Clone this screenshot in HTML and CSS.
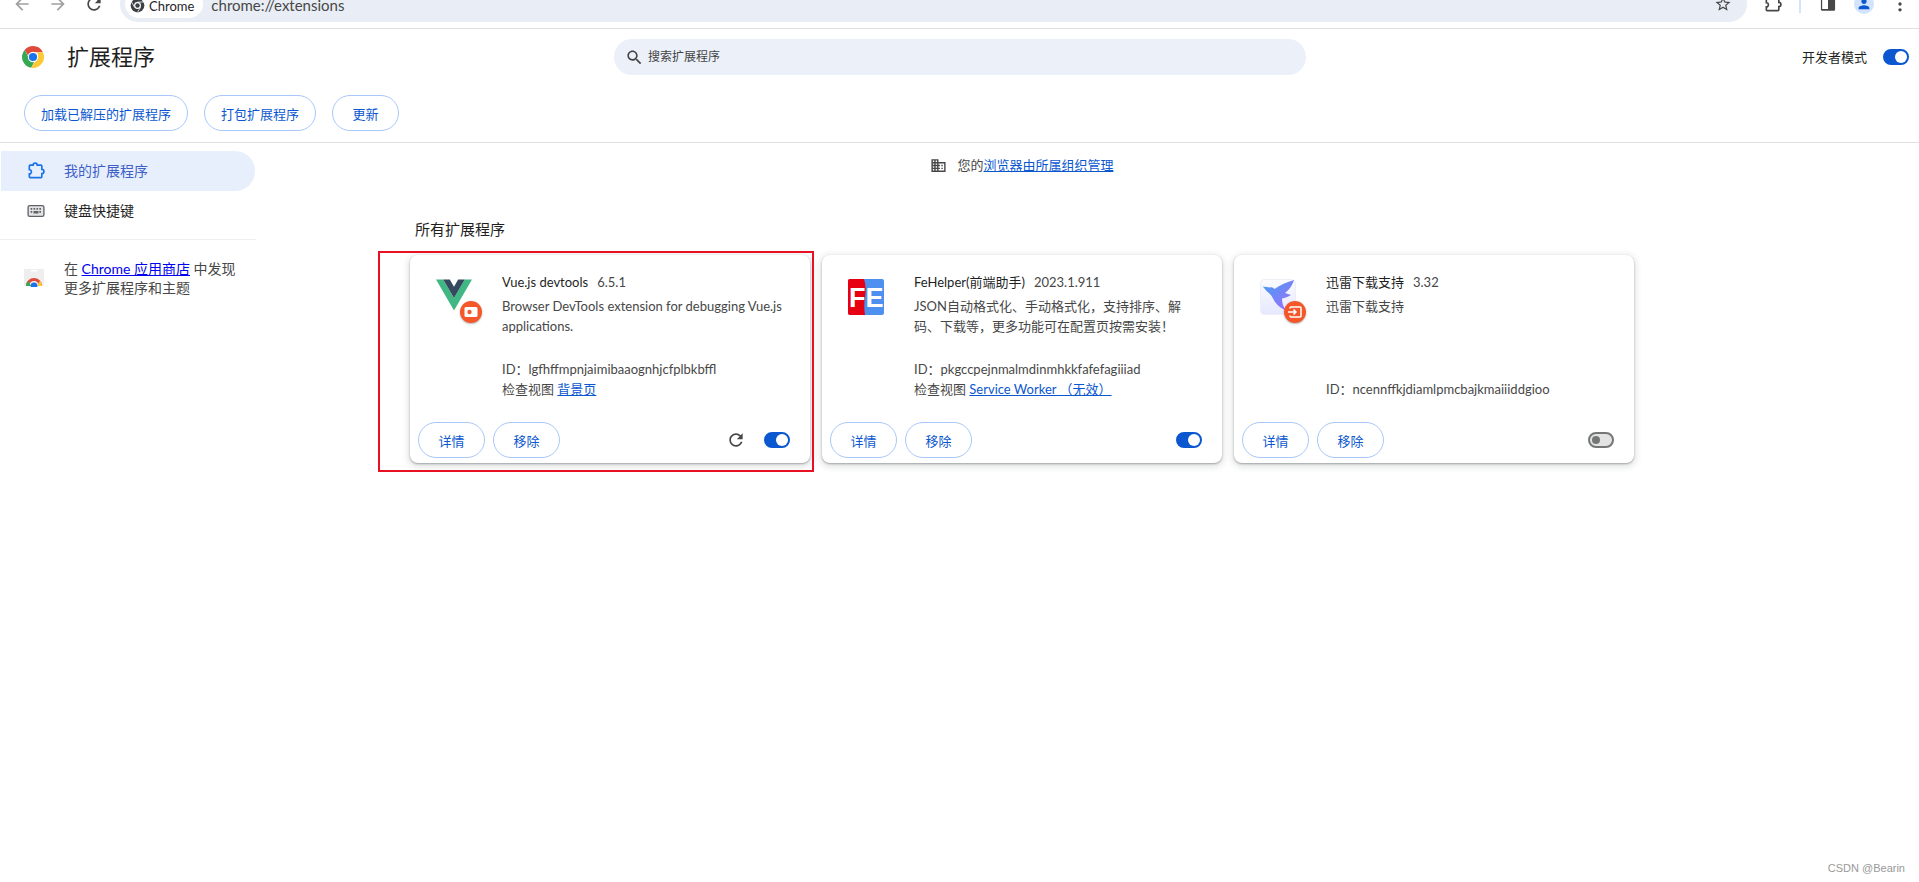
FILE: index.html
```html
<!DOCTYPE html>
<html lang="zh-CN">
<head>
  <meta charset="UTF-8" />
  <title>扩展程序</title>
  <link rel="stylesheet" href="styles.css">
</head>
<body>
  <div class="browser-bar">
    <div class="browser-row">
      <svg class="tb-icon faded" viewBox="0 0 24 24"><path d="M20 11H7.83l5.59-5.59L12 4l-8 8 8 8 1.41-1.41L7.83 13H20v-2z"/></svg>
      <svg class="tb-icon faded" viewBox="0 0 24 24"><path d="M12 4l-1.41 1.41L16.17 11H4v2h12.17l-5.58 5.59L12 20l8-8z"/></svg>
      <svg class="tb-icon" viewBox="0 0 24 24"><path d="M17.65 6.35C16.2 4.9 14.21 4 12 4c-4.42 0-7.99 3.58-7.99 8s3.57 8 7.99 8c3.73 0 6.84-2.55 7.73-6h-2.08c-.82 2.33-3.04 4-5.65 4-3.31 0-6-2.69-6-6s2.69-6 6-6c1.66 0 3.14.69 4.22 1.78L13 11h7V4l-2.35 2.35z"/></svg>
      <div class="address">
        <div class="chip">
          <svg class="chip-logo" viewBox="0 0 24 24"><circle cx="12" cy="12" r="11" fill="#3c4043"/><circle cx="12" cy="12" r="5.5" fill="#fff"/><circle cx="12" cy="12" r="3.6" fill="#3c4043"/><path d="M12 6.5h10M7.2 14.8L2.5 6.5M16.8 14.8L12 23" stroke="#fff" stroke-width="1.2"/></svg>
          <span>Chrome</span>
        </div>
        <span class="url">chrome://extensions</span>
        <svg class="star" viewBox="0 0 24 24"><path d="M22 9.24l-7.19-.62L12 2 9.19 8.63 2 9.24l5.46 4.73L5.82 21 12 17.27 18.18 21l-1.63-7.03L22 9.24zM12 15.4l-3.76 2.27 1-4.28-3.32-2.88 4.38-.38L12 6.1l1.71 4.04 4.38.38-3.32 2.88 1 4.28L12 15.4z"/></svg>
      </div>
      <div class="browser-actions">
        <svg class="tb-icon puzzle" viewBox="0 0 24 24"><path d="M5 5h3.5a2.5 2.5 0 0 1 5 0H18a1 1 0 0 1 1 1v4a2.5 2.5 0 0 1 0 5v4a1 1 0 0 1-1 1H5a1 1 0 0 1-1-1v-3.5a2.5 2.5 0 0 0 0-5V6a1 1 0 0 1 1-1z"/></svg>
        <span class="tb-sep"></span>
        <svg class="tb-icon" viewBox="0 0 24 24"><path d="M5 4h14a1.5 1.5 0 0 1 1.5 1.5v13A1.5 1.5 0 0 1 19 20H5a1.5 1.5 0 0 1-1.5-1.5v-13A1.5 1.5 0 0 1 5 4zm0 2v12h7V6H5z"/></svg>
        <span class="avatar"><svg viewBox="0 0 24 24"><path d="M12 12c2.21 0 4-1.79 4-4s-1.79-4-4-4-4 1.79-4 4 1.79 4 4 4zm0 2c-2.67 0-8 1.34-8 4v2h16v-2c0-2.66-5.33-4-8-4z"/></svg></span>
        <svg class="tb-icon" viewBox="0 0 24 24"><circle cx="12" cy="5" r="2"/><circle cx="12" cy="12" r="2"/><circle cx="12" cy="19" r="2"/></svg>
      </div>
    </div>
  </div>

  <header class="page-head">
    <div class="head-top">
      <div class="brand">
        <svg class="chrome-logo" viewBox="0 0 24 24">
          <path d="M12 1a11 11 0 0 1 9.9 6.2H12a5 5 0 0 0-4.8 3.6L3.6 4.9A11 11 0 0 1 12 1z" fill="#e04a3b"/>
          <path d="M3.6 4.9l5.2 9.6a5 5 0 0 0 4.6 2.3L10.1 22.8A11 11 0 0 1 3.6 4.9z" fill="#35a853"/>
          <path d="M21.9 7.2A11 11 0 0 1 10.1 22.8l5.7-9A5 5 0 0 0 15.6 7.2z" fill="#fcc934"/>
          <circle cx="12" cy="12" r="5.2" fill="#fff"/>
          <circle cx="12" cy="12" r="4.1" fill="#1a73e8"/>
        </svg>
        <h1>扩展程序</h1>
      </div>
      <div class="search">
        <svg viewBox="0 0 24 24"><path d="M15.5 14h-.79l-.28-.27C15.41 12.59 16 11.11 16 9.5 16 5.91 13.09 3 9.5 3S3 5.91 3 9.5 5.91 16 9.5 16c1.61 0 3.09-.59 4.23-1.57l.27.28v.79l5 4.99L20.49 19l-4.99-5zm-6 0C7.01 14 5 11.99 5 9.5S7.01 5 9.5 5 14 7.01 14 9.5 11.99 14 9.5 14z"/></svg>
        <span>搜索扩展程序</span>
      </div>
      <div class="dev-mode">
        <span>开发者模式</span>
        <span class="toggle on"></span>
      </div>
    </div>
    <div class="head-actions">
      <button class="pill">加载已解压的扩展程序</button>
      <button class="pill">打包扩展程序</button>
      <button class="pill">更新</button>
    </div>
  </header>

  <div class="layout">
    <nav class="sidebar">
      <a class="nav-item active">
        <svg class="nav-icon outlined" viewBox="0 0 24 24"><path d="M5 5h3.5a2.5 2.5 0 0 1 5 0H18a1 1 0 0 1 1 1v4a2.5 2.5 0 0 1 0 5v4a1 1 0 0 1-1 1H5a1 1 0 0 1-1-1v-3.5a2.5 2.5 0 0 0 0-5V6a1 1 0 0 1 1-1z"/></svg>
        <span>我的扩展程序</span>
      </a>
      <a class="nav-item">
        <svg class="nav-icon" viewBox="0 0 24 24"><rect x="2.5" y="5.5" width="19" height="13" rx="2" fill="#e4e4e4" stroke="#5f6368" stroke-width="1.6"/><path d="M5.5 8.5h2v2h-2zM9 8.5h2v2H9zM12.500 8.500h2v2h-2zM16 8.500h2v2h-2zM5.500 12h2v2h-2zM16 12h2v2h-2zM9 12h6v3H9z"/></svg>
        <span>键盘快捷键</span>
      </a>
      <div class="nav-divider"></div>
      <div class="store-link">
        <svg class="store-icon" viewBox="0 0 20 18">
          <rect width="20" height="17" fill="#eeeeee"/>
          <rect x="7" y="1" width="6" height="1.5" fill="#fff"/>
          <path d="M2 17a8 8 0 0 1 16 0h-3a5 5 0 0 0-10 0z" fill="#e04a3b"/>
          <path d="M2 17a8 8 0 0 1 2-5.3L7 17z" fill="#35a853"/>
          <path d="M18 17a8 8 0 0 0-2-5.3L13 17z" fill="#fcc934"/>
          <circle cx="10" cy="17" r="3.4" fill="#1a73e8"/>
        </svg>
        <p>在 <a class="store-anchor">Chrome 应用商店</a> 中发现<br>更多扩展程序和主题</p>
      </div>
    </nav>

    <main class="content">
      <div class="managed">
        <svg viewBox="0 0 24 24"><path d="M12 7V3H2v18h20V7H12zM6 19H4v-2h2v2zm0-4H4v-2h2v2zm0-4H4V9h2v2zm0-4H4V5h2v2zm4 12H8v-2h2v2zm0-4H8v-2h2v2zm0-4H8V9h2v2zm0-4H8V5h2v2zm10 12h-8v-2h2v-2h-2v-2h2v-2h-2V9h8v10zm-2-8h-2v2h2v-2zm0 4h-2v2h2v-2z"/></svg>
        <span>您的<a class="link">浏览器由所属组织管理</a></span>
      </div>
      <h2 class="section-title">所有扩展程序</h2>

      <div class="cards">
        <div class="highlight"></div>

        <section class="card">
          <div class="card-main">
            <div class="ext-icon">
              <svg class="ext-img vue" viewBox="0 0 256 221">
                <path d="M204.8 0H256L128 220.8 0 0h51.2L128 132.48 204.8 0z" fill="#41b883"/>
                <path d="M51.2 0L128 132.48 204.8 0h-47.36L128 51.2 97.92 0H51.2z" fill="#35495e"/>
              </svg>
              <span class="badge">
                <svg viewBox="0 0 22 22"><rect x="4.500" y="6" width="13" height="10" rx="1.500" fill="#fff"/><circle cx="9.500" cy="11" r="2.200" fill="#f4582a"/></svg>
              </span>
            </div>
            <div class="ext-text">
              <div class="ext-title"><span class="ext-name">Vue.js devtools</span><span class="ext-version">6.5.1</span></div>
              <p class="ext-desc">Browser DevTools extension for debugging Vue.js applications.</p>
              <div class="ext-id">ID：lgfhffmpnjaimibaaognhjcfplbkbffl</div>
              <div class="ext-view">检查视图 <a class="link">背景页</a></div>
            </div>
          </div>
          <div class="card-foot">
            <button class="pill">详情</button>
            <button class="pill">移除</button>
            <svg class="reload" viewBox="0 0 24 24"><path d="M17.65 6.35C16.2 4.9 14.21 4 12 4c-4.42 0-7.99 3.58-7.99 8s3.57 8 7.99 8c3.73 0 6.84-2.55 7.73-6h-2.08c-.82 2.33-3.04 4-5.65 4-3.31 0-6-2.69-6-6s2.69-6 6-6c1.66 0 3.14.69 4.22 1.78L13 11h7V4l-2.35 2.35z"/></svg>
            <span class="toggle on"></span>
          </div>
        </section>

        <section class="card">
          <div class="card-main">
            <div class="ext-icon">
              <svg class="ext-img" viewBox="0 0 36 36">
                <rect width="36" height="36" rx="2" fill="#4d90f0"/>
                <path d="M2 0h14c2 6 2 12 1 18s-1 12 0 18H2a2 2 0 0 1-2-2V2a2 2 0 0 1 2-2z" fill="#e60012"/>
                <text x="1" y="28" class="fe-text">FE</text>
              </svg>
            </div>
            <div class="ext-text">
              <div class="ext-title"><span class="ext-name">FeHelper(前端助手)</span><span class="ext-version">2023.1.911</span></div>
              <p class="ext-desc">JSON自动格式化、手动格式化，支持排序、解码、下载等，更多功能可在配置页按需安装！</p>
              <div class="ext-id">ID：pkgccpejnmalmdinmhkkfafefagiiiad</div>
              <div class="ext-view">检查视图 <a class="link">Service Worker （无效）</a></div>
            </div>
          </div>
          <div class="card-foot">
            <button class="pill">详情</button>
            <button class="pill">移除</button>
            <span class="toggle on push"></span>
          </div>
        </section>

        <section class="card">
          <div class="card-main">
            <div class="ext-icon">
              <svg class="ext-img" viewBox="0 0 36 36">
                <defs>
                  <linearGradient id="tile" x1="0" y1="0" x2="0" y2="1"><stop offset="0" stop-color="#fbfbff"/><stop offset="1" stop-color="#e6e8ff"/></linearGradient>
                  <linearGradient id="bird" x1="0" y1="0" x2="1" y2="1"><stop offset="0" stop-color="#3fa0f5"/><stop offset="1" stop-color="#a76cf8"/></linearGradient>
                </defs>
                <rect x=".5" y=".5" width="35" height="35" rx="4" fill="url(#tile)" stroke="#eeeef4"/>
                <path d="M2 7.500c3 .5 6 .5 8 1 1.500-.5 3 0 4.500 1.500C20 6 27 3 34 1c-2 6-5 10-9 13l6 2c-3 2-6 3-9 3.500 0 4 1 8 4 12-7-3-11-8-13-12-1.500-3-3-5-6-7-2-2-3-4-5-5.500z" fill="url(#bird)"/>
              </svg>
              <span class="badge">
                <svg viewBox="0 0 22 22"><path d="M6 7.500V7a1 1 0 0 1 1-1h9a1 1 0 0 1 1 1v8a1 1 0 0 1-1 1H7a1 1 0 0 1-1-1v-.5M4 11h8M9.500 8.500L12 11l-2.500 2.500" fill="none" stroke="#fff" stroke-width="1.500"/></svg>
              </span>
            </div>
            <div class="ext-text">
              <div class="ext-title"><span class="ext-name">迅雷下载支持</span><span class="ext-version">3.32</span></div>
              <p class="ext-desc">迅雷下载支持</p>
              <div class="ext-id">ID：ncennffkjdiamlpmcbajkmaiiiddgioo</div>
            </div>
          </div>
          <div class="card-foot">
            <button class="pill">详情</button>
            <button class="pill">移除</button>
            <span class="toggle push"></span>
          </div>
        </section>
      </div>
    </main>
  </div>

  <div class="watermark">CSDN @Bearin</div>
</body>
</html>
```

FILE: styles.css
```css
:root {
  --blue: #0b57d0;
  --pill-border: #a8c7fa;
  --text: #1f1f1f;
  --text-soft: #474747;
  --line: #e0e0e0;
}

* {
  box-sizing: border-box;
}

html, body {
  height: 100%;
}

body {
  margin: 0;
  position: relative;
  overflow: hidden;
  background: #fff;
  color: var(--text);
  font-family: Lato, "Noto Sans CJK SC", sans-serif;
  font-size: 13px;
  line-height: 20px;
}

/* browser chrome, cut off at the top of the shot */
.browser-bar {
  height: 29px;
  overflow: hidden;
  border-bottom: 1px solid var(--line);
}

.browser-row {
  display: flex;
  align-items: center;
  height: 36px;
  margin-top: -14px;
  padding-left: 12px;
}

.tb-icon {
  width: 20px;
  height: 20px;
  margin-right: 16px;
  fill: #474747;
  flex: none;
}

.tb-icon.faded {
  fill: #a0a0a0;
}

.tb-icon.puzzle {
  fill: none;
  stroke: #474747;
  stroke-width: 2;
}

.address {
  display: flex;
  align-items: center;
  width: 1627px;
  height: 36px;
  padding-left: 5px;
  background: #e9eef6;
  border-radius: 18px;
}

.chip {
  display: flex;
  align-items: center;
  gap: 4px;
  height: 28px;
  padding: 3px 9px 0 5px;
  background: #fff;
  border-radius: 14px;
  font-size: 13px;
}

.chip-logo {
  width: 15px;
  height: 15px;
}

.url {
  margin-left: 8px;
  padding-top: 2px;
  font-size: 15px;
  color: #474747;
}

.star {
  width: 18px;
  height: 18px;
  margin-left: auto;
  margin-right: 15px;
  fill: #474747;
}

.browser-actions {
  display: flex;
  align-items: center;
  margin-left: 16px;
}

.browser-actions .tb-icon {
  margin-right: 0;
}

.tb-sep {
  width: 2px;
  height: 18px;
  margin: 0 17px 0 16px;
  background: #d3e3fd;
}

.avatar {
  display: flex;
  align-items: center;
  justify-content: center;
  width: 20px;
  height: 20px;
  margin: 0 16px 0 16px;
  background: #d3e3fd;
  border-radius: 50%;
}

.avatar svg {
  width: 16px;
  height: 16px;
  fill: var(--blue);
}

/* page header */
.page-head {
  height: 114px;
  border-bottom: 1px solid var(--line);
  padding-top: 10px;
}

.head-top {
  display: flex;
  align-items: center;
  height: 36px;
}

.brand {
  display: flex;
  align-items: center;
  width: 614px;
  padding-left: 21px;
}

.chrome-logo {
  width: 24px;
  height: 24px;
}

h1 {
  margin: 0 0 0 22px;
  font-size: 22px;
  font-weight: 400;
  line-height: 28px;
}

.search {
  display: flex;
  align-items: center;
  width: 692px;
  height: 36px;
  padding-left: 11px;
  background: #ebf0f9;
  border-radius: 18px;
  font-size: 12px;
  color: #444;
}

.search svg {
  width: 19px;
  height: 19px;
  margin-right: 4px;
  fill: #444;
}

.dev-mode {
  display: flex;
  align-items: center;
  gap: 16px;
  margin-left: auto;
  padding-right: 10px;
}

.toggle {
  position: relative;
  display: block;
  flex: none;
  width: 26px;
  height: 16px;
  background: #e3e3e3;
  border: 2px solid #747775;
  border-radius: 8px;
}

.toggle::after {
  content: "";
  position: absolute;
  left: 2px;
  top: 2px;
  width: 8px;
  height: 8px;
  background: #747775;
  border-radius: 50%;
}

.toggle.on {
  background: var(--blue);
  border-color: var(--blue);
}

.toggle.on::after {
  left: 10px;
  top: 0;
  width: 12px;
  height: 12px;
  background: #fff;
}

.head-actions {
  display: flex;
  gap: 16px;
  padding: 20px 0 0 24px;
}

.pill {
  min-width: 67px;
  height: 36px;
  padding: 0 16px;
  background: #fff;
  border: 1px solid var(--pill-border);
  border-radius: 18px;
  color: var(--blue);
  font-family: inherit;
  font-size: 13px;
}

/* sidebar + cards */
.layout {
  display: flex;
}

.sidebar {
  flex: none;
  width: 256px;
  padding-top: 8px;
}

.nav-item {
  display: flex;
  align-items: center;
  width: 254px;
  height: 40px;
  margin-left: 1px;
  padding-left: 25px;
  border-radius: 0 20px 20px 0;
  font-size: 14px;
}

.nav-item.active {
  background: #e8effc;
  color: #3f5fc8;
}

.nav-icon {
  width: 20px;
  height: 20px;
  margin-right: 18px;
  fill: #5f6368;
}

.nav-icon.outlined {
  fill: none;
  stroke: #1a73e8;
  stroke-width: 2;
}

.nav-divider {
  height: 1px;
  margin-top: 8px;
  background: #eee;
}

.store-link {
  display: flex;
  padding: 19px 0 0 24px;
}

.store-icon {
  width: 20px;
  height: 18px;
  margin-top: 10px;
  margin-right: 20px;
}

.store-link p {
  margin: 0;
  font-size: 14px;
  color: #474747;
  line-height: 19px;
}

.store-anchor {
  color: #0000ee;
  text-decoration: underline;
}

.content {
  width: 1224px;
  margin-left: 154px;
}

.managed {
  display: flex;
  align-items: center;
  justify-content: center;
  gap: 10px;
  height: 20px;
  margin-top: 12px;
  color: #474747;
}

.managed svg {
  width: 17px;
  height: 17px;
  fill: #474747;
}

.link {
  color: var(--blue);
  text-decoration: underline;
}

.section-title {
  margin: 44px 0 16px 5px;
  font-size: 15px;
  font-weight: 400;
  line-height: 20px;
}

.cards {
  position: relative;
  display: flex;
  gap: 12px;
}

.highlight {
  position: absolute;
  left: -32px;
  top: -4px;
  width: 436px;
  height: 221px;
  border: 2px solid #e81123;
  pointer-events: none;
}

.card {
  display: flex;
  flex-direction: column;
  width: 400px;
  height: 208px;
  background: #fff;
  border-radius: 8px;
  box-shadow: 0 1px 2px rgba(60, 64, 67, 0.4), 0 2px 6px 2px rgba(60, 64, 67, 0.15);
}

.card-main {
  display: flex;
  height: 167px;
  padding-top: 17px;
}

.ext-icon {
  position: relative;
  flex: none;
  width: 92px;
  padding: 7px 0 0 26px;
}

.ext-img {
  display: block;
  width: 36px;
  height: 36px;
}

.ext-img.vue {
  height: 32px;
}

.fe-text {
  font-family: "Liberation Sans", sans-serif;
  font-size: 27px;
  font-weight: 700;
  fill: #fff;
}

.badge {
  position: absolute;
  left: 50px;
  top: 29px;
  width: 22px;
  height: 22px;
  background: #f4582a;
  border-radius: 50%;
  box-shadow: 0 1px 2px rgba(0, 0, 0, 0.3);
}

.badge svg {
  display: block;
  width: 22px;
  height: 22px;
}

.ext-text {
  display: flex;
  flex-direction: column;
  width: 288px;
  height: 127px;
}

.ext-title {
  display: flex;
  gap: 9px;
  color: var(--text);
}

.ext-version {
  color: var(--text-soft);
}

.ext-desc {
  flex: 1;
  margin: 4px 0 0;
  color: var(--text-soft);
}

.ext-id, .ext-view {
  color: var(--text-soft);
}

.card-foot {
  display: flex;
  align-items: center;
  gap: 8px;
  height: 36px;
  padding: 0 20px 0 8px;
}

.reload {
  width: 20px;
  height: 20px;
  margin-left: auto;
  margin-right: 10px;
  fill: #474747;
}

.push {
  margin-left: auto;
}

.watermark {
  position: absolute;
  right: 14px;
  bottom: 4px;
  font-family: "Liberation Sans", sans-serif;
  font-size: 11px;
  color: #999;
}
```
